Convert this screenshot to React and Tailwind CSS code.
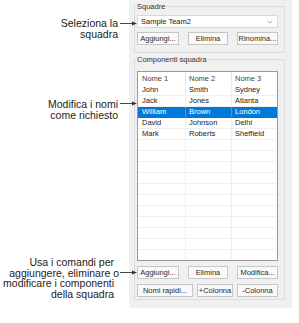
import React from "react";

const members = [
  ["John", "Smith", "Sydney"],
  ["Jack", "Jones", "Atlanta"],
  ["William", "Brown", "London"],
  ["David", "Johnson", "Delhi"],
  ["Mark", "Roberts", "Sheffield"],
];

// filler rows so the grid lines run down to the bottom of the list
const rows = [...members, ...Array.from({ length: 11 }, () => ["", "", ""])];

function Arrow({ className }) {
  return (
    <svg className={className} width="17" height="5" viewBox="0 0 17 5">
      <line x1="0" y1="2.5" x2="13" y2="2.5" stroke="#333" strokeWidth="0.9" />
      <path d="M12 0.6 L17 2.5 L12 4.4 Z" fill="#333" />
    </svg>
  );
}

function Btn({ children, w }) {
  return (
    <button
      className={`h-[13px] ${w} flex items-center justify-center border border-[#c6c6c6] bg-[#f9f9f9] text-[7.5px] leading-none text-[#2a2a2a]`}
    >
      {children}
    </button>
  );
}

export default function App() {
  return (
    <div
      className="flex h-[323px] w-[299px] bg-white"
      style={{ fontFamily: '"Liberation Sans", Arial, sans-serif' }}
    >
      {/* callouts */}
      <div className="flex w-[129px] shrink-0 flex-col pt-[18px] text-right text-[10.5px] text-[#222]">
        <div className="relative pr-[11px] leading-[11px]">
          <p>Seleziona la</p>
          <p>squadra</p>
          <Arrow className="absolute right-[-8px] top-[3px] z-10" />
        </div>
        <div className="relative mt-[59px] pr-[11px] leading-[11px]">
          <p>Modifica i nomi</p>
          <p>come richiesto</p>
          <Arrow className="absolute right-[-8px] top-[2px] z-10" />
        </div>
        <div className="relative mt-[136px] pr-[15px] leading-[10.5px]">
          <p>Usa i comandi per</p>
          <p className="mr-[-5px]">aggiungere, eliminare o</p>
          <p>modificare i componenti</p>
          <p>della squadra</p>
          <Arrow className="absolute right-[-8px] top-[13px] z-10" />
        </div>
      </div>

      {/* dialog panel */}
      <div className="h-[308px] w-[163px] shrink-0 bg-[#f0f0f0] pt-[2px] text-[7.5px] text-[#222]">
        <fieldset className="ml-[5px] w-[151px] border border-[#dcdcdc] pb-[7px] pl-[2px] pr-[6px]">
          <legend className="ml-[-1px] px-[1px] leading-[9px] text-[#333]">Squadre</legend>
          <div className="mt-[4px] flex h-[13px] items-center justify-between border border-[#d9d9d9] bg-white pl-[3px] pr-[4px]">
            <span>Sample Team2</span>
            <svg width="6" height="4" viewBox="0 0 6 4">
              <path d="M0.5 0.5 L3 3 L5.5 0.5" fill="none" stroke="#999" strokeWidth="0.8" />
            </svg>
          </div>
          <div className="mt-[4px] flex justify-between">
            <Btn w="w-[42px]">Aggiungi...</Btn>
            <Btn w="w-[40px]">Elimina</Btn>
            <Btn w="w-[41px]">Rinomina...</Btn>
          </div>
        </fieldset>

        <fieldset className="ml-[5px] mt-[2px] w-[151px] border border-[#dcdcdc] pb-[2px] pl-[2px] pr-[6px]">
          <legend className="ml-[-1px] px-[1px] leading-[9px] text-[#333]">Componenti squadra</legend>
          <div className="mt-[7px] border border-[#9a9a9a] bg-white">
            <div className="grid h-[13px] grid-cols-[48px_46px_45px] items-center text-[#444]">
              <div className="h-full border-r border-[#e5e5e5] pl-[4px] leading-[13px]">Nome 1</div>
              <div className="h-full border-r border-[#e5e5e5] pl-[3px] leading-[13px]">Nome 2</div>
              <div className="h-full pl-[3px] leading-[13px]">Nome 3</div>
            </div>
            <div className="h-[175px] overflow-hidden">
              {rows.map((r, i) => {
                const sel = i === 2;
                return (
                  <div
                    key={i}
                    className={`grid h-[11px] grid-cols-[48px_46px_45px] border-b leading-[10px] ${
                      sel ? "border-[#0078d7] bg-[#0078d7] text-white" : "border-[#efefef] text-[#1a1a1a]"
                    }`}
                  >
                    <div className={`border-r pl-[4px] ${sel ? "border-[#3d96e0]" : "border-[#efefef]"}`}>{r[0]}</div>
                    <div className={`border-r pl-[3px] ${sel ? "border-[#3d96e0]" : "border-[#efefef]"}`}>{r[1]}</div>
                    <div className="pl-[3px]">{r[2]}</div>
                  </div>
                );
              })}
            </div>
          </div>
          <div className="mt-[5px] flex justify-between">
            <Btn w="w-[42px]">Aggiungi...</Btn>
            <Btn w="w-[40px]">Elimina</Btn>
            <Btn w="w-[41px]">Modifica...</Btn>
          </div>
          <div className="mt-[5px] flex justify-between">
            <Btn w="w-[56px]">Nomi rapidi...</Btn>
            <Btn w="w-[36px]">+Colonna</Btn>
            <Btn w="w-[41px]">-Colonna</Btn>
          </div>
        </fieldset>
      </div>
    </div>
  );
}
